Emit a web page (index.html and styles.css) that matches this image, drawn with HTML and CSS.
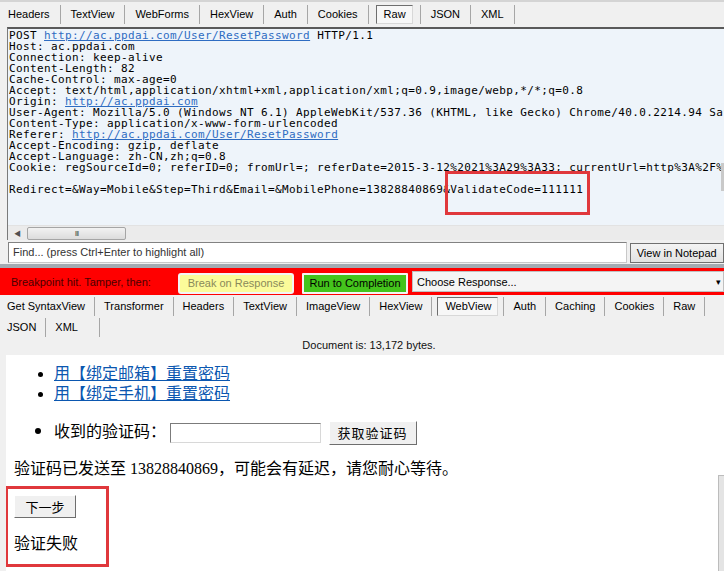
FILE: index.html
```html
<!DOCTYPE html>
<html lang="zh-CN">
<head>
    <meta charset="UTF-8">
    <title>Fiddler - Breakpoint</title>
    <link rel="stylesheet" href="styles.css">
</head>
<body>
    <div class="tabs top-tabs">
        <span class="tab first">Headers</span>
        <span class="tab">TextView</span>
        <span class="tab">WebForms</span>
        <span class="tab">HexView</span>
        <span class="tab">Auth</span>
        <span class="tab">Cookies</span>
        <span class="tab boxed"><span class="tab-box">Raw</span></span>
        <span class="tab">JSON</span>
        <span class="tab">XML</span>
    </div>

    <div class="raw-view">
<pre class="raw-text">POST <a href="#">http://ac.ppdai.com/User/ResetPassword</a> HTTP/1.1
Host: ac.ppdai.com
Connection: keep-alive
Content-Length: 82
Cache-Control: max-age=0
Accept: text/html,application/xhtml+xml,application/xml;q=0.9,image/webp,*/*;q=0.8
Origin: <a href="#">http://ac.ppdai.com</a>
User-Agent: Mozilla/5.0 (Windows NT 6.1) AppleWebKit/537.36 (KHTML, like Gecko) Chrome/40.0.2214.94 Safari/537.36
Content-Type: application/x-www-form-urlencoded
Referer: <a href="#">http://ac.ppdai.com/User/ResetPassword</a>
Accept-Encoding: gzip, deflate
Accept-Language: zh-CN,zh;q=0.8
Cookie: regSourceId=0; referID=0; fromUrl=; referDate=2015-3-12%2021%3A29%3A33; currentUrl=http%3A%2F%2Fac.ppdai.com

Redirect=&amp;Way=Mobile&amp;Step=Third&amp;Email=&amp;MobilePhone=13828840869&amp;ValidateCode=111111</pre>
        <div class="mark mark-code"></div>
        <div class="vscroll-thumb"></div>
        <div class="hscroll">
            <span class="arrow">&#9664;</span>
            <span class="thumb">III</span>
        </div>
    </div>

    <div class="find-row">
        <div class="find-box">Find... (press Ctrl+Enter to highlight all)</div>
        <button class="btn-notepad">View in Notepad</button>
    </div>

    <div class="splitter"></div>

    <div class="breakpoint-bar">
        <span class="bp-label">Breakpoint hit. Tamper, then:</span>
        <button class="bp-btn bp-break">Break on Response</button>
        <button class="bp-btn bp-run">Run to Completion</button>
        <div class="bp-select">
            <span>Choose Response...</span>
            <span class="caret">&#9662;</span>
        </div>
    </div>

    <div class="tabs resp-tabs">
        <span class="tab first">Get SyntaxView</span>
        <span class="tab">Transformer</span>
        <span class="tab">Headers</span>
        <span class="tab">TextView</span>
        <span class="tab">ImageView</span>
        <span class="tab">HexView</span>
        <span class="tab boxed"><span class="tab-box">WebView</span></span>
        <span class="tab">Auth</span>
        <span class="tab">Caching</span>
        <span class="tab">Cookies</span>
        <span class="tab">Raw</span>
    </div>
    <div class="tabs resp-tabs">
        <span class="tab first">JSON</span>
        <span class="tab wide">XML</span>
    </div>

    <div class="doc-info">Document is: 13,172 bytes.</div>

    <div class="web-view">
        <ul class="links">
            <li><a href="#">用【绑定邮箱】重置密码</a></li>
            <li><a href="#">用【绑定手机】重置密码</a></li>
        </ul>
        <ul class="code-row">
            <li>
                收到的验证码：<input class="code-input" type="text">
                <button class="code-btn">获取验证码</button>
            </li>
        </ul>
        <p class="notice">验证码已发送至 13828840869，可能会有延迟，请您耐心等待。</p>
        <div class="result-box">
            <button class="next-btn">下一步</button>
            <p class="result">验证失败</p>
        </div>
        <ul class="links bottom-link">
            <li><a href="#">返回首页</a></li>
        </ul>
        <div class="web-scroll"></div>
    </div>
</body>
</html>
```

FILE: styles.css
```css
* {
    margin: 0;
    padding: 0;
    box-sizing: border-box;
}

body {
    width: 724px;
    height: 571px;
    overflow: hidden;
    background: #f0f0f0;
    font-family: 'Liberation Sans', Arial, sans-serif;
    font-size: 11px;
    color: #000;
}

/* tab strips */
.tabs {
    display: flex;
    align-items: center;
    white-space: nowrap;
}

.top-tabs {
    height: 27px;
    border-top: 2px solid #d4d4d4;
}

.tab {
    height: 19px;
    line-height: 19px;
    padding: 0 10px;
    border-right: 1px solid #a6a6a6;
}

.tab.first {
    padding-left: 8px;
}

.tab.boxed {
    padding: 0 7px;
}

.tab-box {
    display: block;
    height: 19px;
    padding: 0 6px 0 7px;
    background: #f7f7f7;
    border: 1px solid;
    border-color: #6e6e6e #d8d8d8 #d8d8d8 #6e6e6e;
    line-height: 17px;
}

/* raw request */
.raw-view {
    position: relative;
    margin-left: 7px;
    height: 213px;
    background: #eef4fa;
    border-top: 2px solid #5a5a5a;
    border-left: 1px solid #7a7a7a;
    overflow: hidden;
}

.raw-text {
    height: 196px;
    padding: 1px 0 0 1px;
    font-family: 'DejaVu Sans Mono', monospace;
    font-size: 11px;
    letter-spacing: 0.38px;
    line-height: 11px;
    white-space: pre;
    overflow: hidden;
}

.raw-text a {
    display: inline-block;
    height: 11px;
    line-height: 11px;
    vertical-align: top;
    color: #2e6cc2;
}

.mark {
    position: absolute;
    border: 3px solid #e0383c;
}

.mark-code {
    left: 437px;
    top: 142px;
    width: 145px;
    height: 44px;
}

.vscroll-thumb {
    position: absolute;
    right: 0;
    top: 134px;
    width: 3px;
    height: 28px;
    background: #c9c9c9;
}

.hscroll {
    display: flex;
    align-items: center;
    height: 15px;
    background: #ebebeb;
    border-top: 1px solid #e2e2e2;
}

.hscroll .arrow {
    width: 19px;
    text-align: center;
    font-size: 7px;
    color: #505050;
}

.hscroll .thumb {
    width: 99px;
    height: 13px;
    border: 1px solid #a5a5a5;
    border-radius: 2px;
    background: linear-gradient(#f2f2f2, #dcdcdc);
    text-align: center;
    font-size: 8px;
    line-height: 11px;
    color: #555;
    letter-spacing: -1px;
}

/* find row */
.find-row {
    display: flex;
    align-items: center;
    gap: 3px;
    height: 24px;
    padding-left: 8px;
    padding-top: 1px;
}

.find-box {
    width: 624px;
    height: 21px;
    line-height: 19px;
    padding-left: 4px;
    background: #fff;
    border: 1px solid;
    border-color: #828282 #c8c8c8 #c8c8c8 #828282;
    color: #333;
}

.btn-notepad {
    width: 95px;
    height: 20px;
    padding-left: 6px;
    text-align: left;
    font-family: inherit;
    font-size: 11px;
    background: linear-gradient(#f4f4f4, #e2e2e2);
    border: 1px solid #707070;
}

.splitter {
    height: 4px;
    background: #a3abb2;
}

/* breakpoint bar */
.breakpoint-bar {
    display: flex;
    align-items: center;
    height: 27px;
    padding-left: 11px;
    background: #ff0000;
}

.bp-label {
    width: 167px;
    color: #4a0000;
}

.bp-btn {
    height: 21px;
    margin-top: 3px;
    font-family: inherit;
    font-size: 11px;
    border: 2px solid #f4f4f4;
    border-radius: 3px;
}

.bp-break {
    width: 116px;
    background: #fbfb9a;
    color: #8a8a5a;
}

.bp-run {
    width: 106px;
    margin-left: 8px;
    background: #44c41c;
    color: #000;
    border-radius: 1px;
}

.bp-select {
    display: flex;
    justify-content: space-between;
    align-items: center;
    flex: 1;
    height: 21px;
    margin-left: 4px;
    padding: 0 2px 0 4px;
    background: #f4f4f4;
    border: 1px solid #c0c0c0;
}

.bp-select .caret {
    font-size: 9px;
}

/* response */
.resp-tabs {
    height: 21px;
}

.breakpoint-bar + .resp-tabs {
    margin-top: 1px;
}

.resp-tabs .tab {
    padding: 0 9px;
}

.resp-tabs .tab.first {
    padding-left: 7px;
}

.resp-tabs .tab.boxed {
    padding: 0 5px;
}

.resp-tabs .tab.wide {
    padding-right: 21px;
}

.doc-info {
    height: 17px;
    line-height: 14px;
    padding-left: 14px;
    text-align: center;
    color: #111;
}

.web-view {
    position: relative;
    height: 240px;
    margin-left: 6px;
    background: #fff;
    font-family: 'Liberation Serif', 'Noto Sans CJK SC', serif;
    font-size: 16px;
    overflow: hidden;
}

.web-view ul {
    padding-left: 48px;
    list-style: disc;
}

.links {
    padding-top: 8px;
    line-height: 18px;
}

.links a {
    color: #0b57b0;
    font-family: 'Noto Sans CJK SC', sans-serif;
    font-size: 16px;
}

.code-row {
    margin-top: 15px;
    font-family: 'Noto Sans CJK SC', sans-serif;
    font-size: 16px;
    line-height: 24px;
}

.code-input {
    width: 151px;
    height: 20px;
    margin-left: 4px;
    vertical-align: middle;
    border: 1px solid;
    border-color: #7b7b7b #d8d8d8 #d8d8d8 #7b7b7b;
}

.code-btn {
    width: 88px;
    height: 24px;
    margin-left: 4px;
    vertical-align: middle;
    font-family: 'Noto Sans CJK SC', sans-serif;
    font-size: 13px;
    letter-spacing: 1px;
    background: #f0f0f0;
    border: 1px solid;
    border-color: #fff #6e6e6e #6e6e6e #fff;
}

.notice {
    margin-top: 14px;
    padding-left: 8px;
    line-height: 20px;
}

.result-box {
    width: 104px;
    margin: 7px 0 0 -1px;
    padding: 6px 0 12px 6px;
    border: 3px solid #e0383c;
}

.next-btn {
    width: 62px;
    height: 23px;
    font-family: 'Noto Sans CJK SC', sans-serif;
    font-size: 13px;
    background: #f0f0f0;
    border: 1px solid;
    border-color: #fff #6e6e6e #6e6e6e #fff;
}

.result {
    margin-top: 14px;
    line-height: 20px;
    font-family: 'Noto Sans CJK SC', sans-serif;
}

.bottom-link {
    padding-top: 2px;
}

.web-scroll {
    position: absolute;
    right: 0;
    top: 120px;
    width: 6px;
    height: 130px;
    background: #e4e4e4;
    border: 1px solid #bcbcbc;
    border-right: none;
}
```
